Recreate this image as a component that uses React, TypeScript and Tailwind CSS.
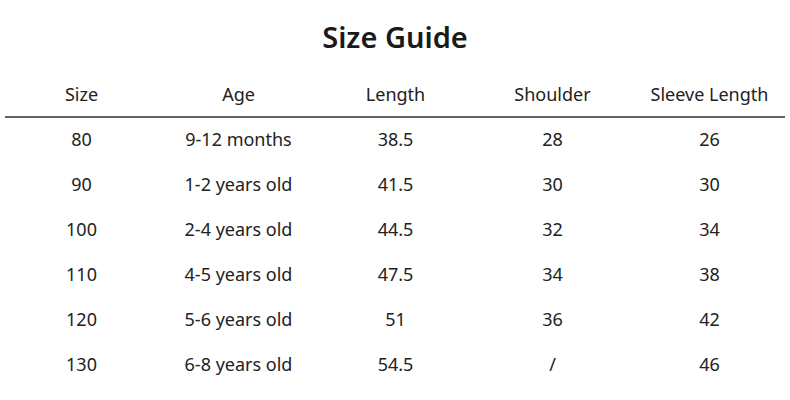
const HEADERS = ["Size", "Age", "Length", "Shoulder", "Sleeve Length"];

const ROWS = [
  ["80", "9-12 months", "38.5", "28", "26"],
  ["90", "1-2 years old", "41.5", "30", "30"],
  ["100", "2-4 years old", "44.5", "32", "34"],
  ["110", "4-5 years old", "47.5", "34", "38"],
  ["120", "5-6 years old", "51", "36", "42"],
  ["130", "6-8 years old", "54.5", "/", "46"],
];

export default function App() {
  return (
    <div className="h-[400px] w-[790px] bg-white font-['Noto_Sans',sans-serif] text-[#1a1a1a]">
      <h1 className="flex h-[58px] items-end justify-center pb-[1px] text-[29px] font-semibold leading-[40px]">
        Size Guide
      </h1>
      <div className="grid h-[58px] grid-cols-[repeat(5,157px)] items-center pl-[3px] pt-[15px] text-[18px] text-[#222]">
        {HEADERS.map((h) => (
          <div key={h} className="text-center">
            {h}
          </div>
        ))}
      </div>
      <div className="mx-[5px] h-[2px] w-[780px] bg-[#666]" />
      <div className="-mt-[1px]">
        {ROWS.map((row) => (
          <div
            key={row[0]}
            className="grid h-[45px] grid-cols-[repeat(5,157px)] items-center pl-[3px] text-[18px] text-[#222]"
          >
            {row.map((cell, i) => (
              <div key={i} className="text-center">
                {cell}
              </div>
            ))}
          </div>
        ))}
      </div>
    </div>
  );
}
